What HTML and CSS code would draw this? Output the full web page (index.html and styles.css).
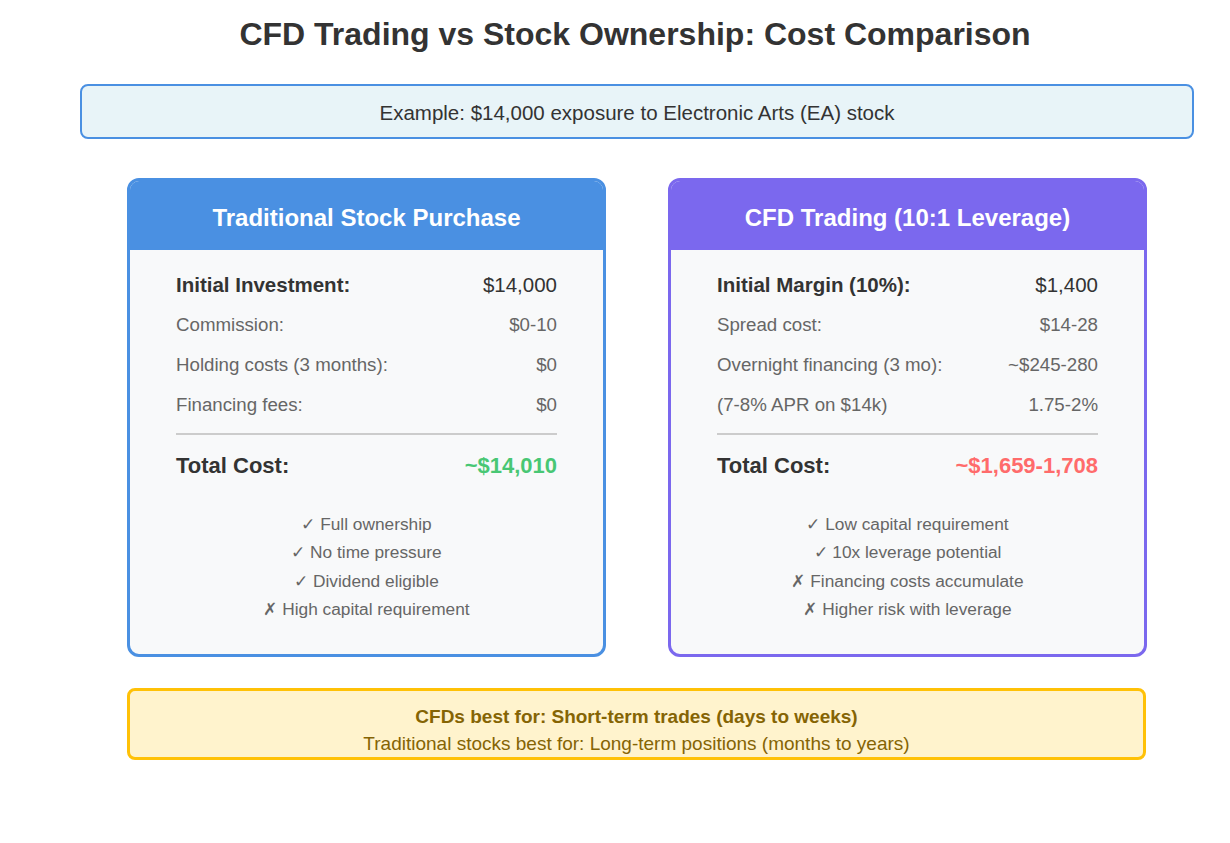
FILE: index.html
```html
<!DOCTYPE html>
<html>
<head>
<meta charset="utf-8">
<link rel="stylesheet" href="styles.css">
</head>
<body>
<div class="page">
  <h1 class="title">CFD Trading vs Stock Ownership: Cost Comparison</h1>
  <div class="example">Example: $14,000 exposure to Electronic Arts (EA) stock</div>
  <div class="cards">
    <div class="card card-blue">
      <div class="card-head">Traditional Stock Purchase</div>
      <div class="card-body">
        <div class="row row-main"><span>Initial Investment:</span><span class="val">$14,000</span></div>
        <div class="row"><span>Commission:</span><span>$0-10</span></div>
        <div class="row"><span>Holding costs (3 months):</span><span>$0</span></div>
        <div class="row"><span>Financing fees:</span><span>$0</span></div>
        <div class="divider"></div>
        <div class="row row-total"><span>Total Cost:</span><span class="green">~$14,010</span></div>
        <ul class="notes">
          <li>✓ Full ownership</li>
          <li>✓ No time pressure</li>
          <li>✓ Dividend eligible</li>
          <li>✗ High capital requirement</li>
        </ul>
      </div>
    </div>
    <div class="card card-purple">
      <div class="card-head">CFD Trading (10:1 Leverage)</div>
      <div class="card-body">
        <div class="row row-main"><span>Initial Margin (10%):</span><span class="val">$1,400</span></div>
        <div class="row"><span>Spread cost:</span><span>$14-28</span></div>
        <div class="row"><span>Overnight financing (3 mo):</span><span>~$245-280</span></div>
        <div class="row"><span>(7-8% APR on $14k)</span><span>1.75-2%</span></div>
        <div class="divider"></div>
        <div class="row row-total"><span>Total Cost:</span><span class="red">~$1,659-1,708</span></div>
        <ul class="notes">
          <li>✓ Low capital requirement</li>
          <li>✓ 10x leverage potential</li>
          <li>✗ Financing costs accumulate</li>
          <li>✗ Higher risk with leverage</li>
        </ul>
      </div>
    </div>
  </div>
  <div class="summary">
    <div class="summary-strong">CFDs best for: Short-term trades (days to weeks)</div>
    <div class="summary-line">Traditional stocks best for: Long-term positions (months to years)</div>
  </div>
</div>
</body>
</html>
```
FILE: styles.css
```css
* { box-sizing: border-box; }
html, body { margin: 0; padding: 0; background: #ffffff; }
body { font-family: "Liberation Sans", Arial, sans-serif; color: #333333; }
.page { width: 1230px; height: 843px; padding-top: 16px; }
.title {
  margin: 0;
  text-align: center;
  font-size: 32px;
  line-height: 37px;
  font-weight: bold;
  color: #333333;
  padding-left: 40px;
}
.example {
  margin: 31px 0 0 80px;
  width: 1114px;
  height: 55px;
  border: 2px solid #4a90e2;
  border-radius: 8px;
  background: #e8f4f8;
  display: flex;
  align-items: center;
  justify-content: center;
  font-size: 20.5px;
  color: #333333;
  padding-top: 3px;
}
.cards {
  margin: 39px 0 0 127px;
  display: flex;
  gap: 62px;
}
.card {
  width: 479px;
  height: 479px;
  border: 3px solid;
  border-radius: 12px;
  background: #f8f9fa;
  overflow: hidden;
}
.card-blue { border-color: #4a90e2; }
.card-purple { border-color: #7b68ee; }
.card-blue .card-head { background: #4a90e2; }
.card-purple .card-head { background: #7b68ee; }
.card-head {
  height: 69px;
  display: flex;
  align-items: center;
  justify-content: center;
  color: #ffffff;
  font-weight: bold;
  font-size: 24px;
  padding-top: 5px;
}
.card-body { padding: 15px 46px 0 46px; }
.row {
  display: flex;
  justify-content: space-between;
  height: 40px;
  align-items: center;
  font-size: 18.7px;
  color: #666666;
}
.row-main { color: #333333; font-size: 20.5px; }
.row-main span:first-child { font-weight: bold; }
.divider { height: 2px; background: #cccccc; margin-top: 8px; }
.row-total {
  margin-top: 11px;
  font-size: 22px;
  font-weight: bold;
  color: #333333;
}
.green { color: #48c774; }
.red { color: #ff6b6b; }
.notes {
  list-style: none;
  margin: 23px 0 0 0;
  padding: 0;
  text-align: center;
  font-size: 17.3px;
  color: #666666;
}
.notes li { height: 28.4px; line-height: 30px; }
.summary {
  margin: 31px 0 0 127px;
  width: 1019px;
  height: 72px;
  border: 3px solid #ffc107;
  border-radius: 8px;
  background: #fff3cd;
  color: #856404;
  text-align: center;
  padding-top: 14px;
}
.summary-strong { font-weight: bold; font-size: 19px; line-height: 24px; }
.summary-line { font-size: 19px; line-height: 29px; }
```
